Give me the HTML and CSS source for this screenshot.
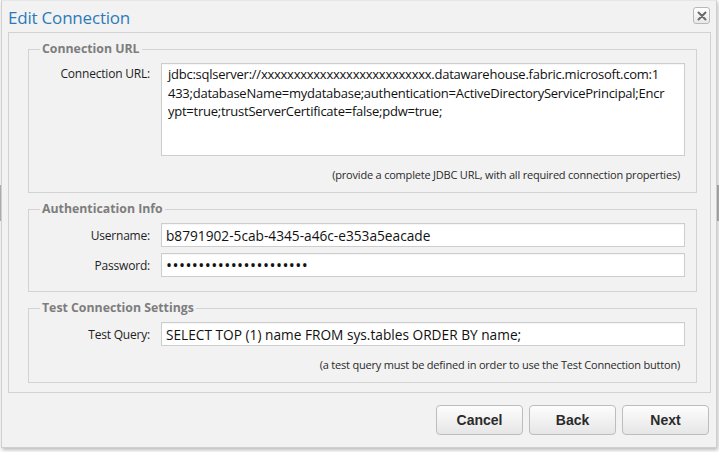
FILE: index.html
```html
<!DOCTYPE html>
<html lang="en">
<head>
<meta charset="utf-8">
<title>Edit Connection</title>
<link rel="stylesheet" href="styles.css">
</head>
<body>
<div class="dialog">
  <div class="titlebar">
    <h1 class="title">Edit Connection</h1>
    <button class="close" type="button" aria-label="Close">
      <svg width="10" height="10" viewBox="0 0 10 10"><path d="M1.5 1.5 L8.5 8.5 M8.5 1.5 L1.5 8.5" stroke="#6a6a6a" stroke-width="2" stroke-linecap="round"/></svg>
    </button>
  </div>

  <div class="panel">
    <fieldset class="group">
      <legend>Connection URL</legend>
      <div class="row">
        <label class="label label-top" for="url">Connection URL:</label>
        <textarea id="url" class="field area" rows="5" spellcheck="false">jdbc:sqlserver://xxxxxxxxxxxxxxxxxxxxxxxxxx.datawarehouse.fabric.microsoft.com:1
433;databaseName=mydatabase;authentication=ActiveDirectoryServicePrincipal;Encr
ypt=true;trustServerCertificate=false;pdw=true;</textarea>
      </div>
      <p class="hint">(provide a complete JDBC URL, with all required connection properties)</p>
    </fieldset>

    <fieldset class="group group-fields">
      <legend>Authentication Info</legend>
      <div class="row">
        <label class="label" for="user">Username:</label>
        <input id="user" class="field" type="text" value="b8791902-5cab-4345-a46c-e353a5eacade">
      </div>
      <div class="row">
        <label class="label" for="pass">Password:</label>
        <input id="pass" class="field field-secret" type="password" value="xxxxxxxxxxxxxxxxxxxxxx">
      </div>
    </fieldset>

    <fieldset class="group">
      <legend>Test Connection Settings</legend>
      <div class="row">
        <label class="label" for="query">Test Query:</label>
        <input id="query" class="field" type="text" value="SELECT TOP (1) name FROM sys.tables ORDER BY name;">
      </div>
      <p class="hint">(a test query must be defined in order to use the Test Connection button)</p>
    </fieldset>
  </div>

  <div class="actions">
    <button class="btn" type="button">Cancel</button>
    <button class="btn" type="button">Back</button>
    <button class="btn" type="button">Next</button>
  </div>
</div>
</body>
</html>
```
FILE: styles.css
```css
html, body {
  margin: 0;
  padding: 0;
}

body {
  width: 719px;
  height: 452px;
  overflow: hidden;
  background:
    linear-gradient(#b9b9b9, #b9b9b9) 0 185px / 2px 36px no-repeat,
    linear-gradient(#b9b9b9, #b9b9b9) 717px 185px / 2px 36px no-repeat,
    #ffffff;
  font-family: "Open Sans", "Noto Sans", sans-serif;
}

.dialog {
  box-sizing: border-box;
  width: 716px;
  height: 448px;
  margin-left: 1px;
  background: #f2f2f2;
  border: 1px solid #cfcfcf;
  border-top-color: #e6e6e6;
  box-shadow: 1px 2px 4px rgba(0, 0, 0, 0.28);
  display: flex;
  flex-direction: column;
}

/* title bar */
.titlebar {
  height: 31px;
  display: flex;
  align-items: flex-start;
  justify-content: space-between;
  padding: 0 6px 0 6px;
}

.title {
  margin: 6px 0 0;
  font-size: 17px;
  font-weight: 400;
  line-height: 22px;
  color: #2b7bbb;
  letter-spacing: -0.2px;
}

.close {
  box-sizing: border-box;
  width: 17px;
  height: 17px;
  margin-top: 6px;
  padding: 0;
  border: 1px solid #b8b8b8;
  border-radius: 3px;
  background: linear-gradient(#ffffff, #e9e9e9);
  display: flex;
  align-items: center;
  justify-content: center;
}

.close svg {
  display: block;
}

/* bordered content panel */
.panel {
  margin: 0 5px 0 6px;
  border: 1px solid #d2d2d2;
  padding: 8px 13px 9px 19px;
  display: flex;
  flex-direction: column;
  gap: 8px;
}

.group {
  margin: 0;
  border: 1px solid #d2d2d2;
  padding: 6px 10px 10px 11px;
  min-width: 0;
}

.group-fields {
  padding-bottom: 14px;
}

.group legend {
  padding: 0 2px;
  font-size: 12.3px;
  line-height: 16px;
  font-weight: 700;
  color: #7d7d7d;
}

.row {
  display: grid;
  grid-template-columns: 110px 524px;
  column-gap: 11px;
  align-items: center;
}

.row + .row {
  margin-top: 6px;
}

.label {
  text-align: right;
  font-size: 12px;
  color: #1e1e1e;
  letter-spacing: -0.2px;
}

.label-top {
  align-self: start;
  padding-top: 2px;
}

.field {
  box-sizing: border-box;
  width: 524px;
  height: 24px;
  margin: 0;
  padding: 0 4px;
  border: 1px solid #cdcdcd;
  background: #ffffff;
  box-shadow: inset 0 1px 1px rgba(0, 0, 0, 0.04);
  font-family: inherit;
  font-size: 13.7px;
  color: #111111;
  outline: none;
}

.field-secret {
  font-size: 16px;
  letter-spacing: 0.45px;
}

.area {
  height: 93px;
  padding: 1px 6px;
  font-size: 13px;
  line-height: 18.5px;
  resize: none;
  overflow: hidden;
  white-space: pre;
  letter-spacing: -0.25px;
}

.hint {
  margin: 12px 6px 0 0;
  text-align: right;
  font-size: 11px;
  line-height: 14px;
  color: #2a2a2a;
  letter-spacing: -0.2px;
}

/* footer buttons */
.actions {
  display: flex;
  justify-content: flex-end;
  gap: 6px;
  padding: 12px 7px 0 0;
}

.btn {
  box-sizing: border-box;
  width: 87px;
  height: 30px;
  border: 1px solid #bdbdbd;
  border-radius: 4px;
  background: linear-gradient(#fdfdfd, #e6e6e6);
  font-family: "Liberation Sans", Arial, sans-serif;
  font-size: 14px;
  font-weight: 700;
  color: #2a2a2a;
}
```
